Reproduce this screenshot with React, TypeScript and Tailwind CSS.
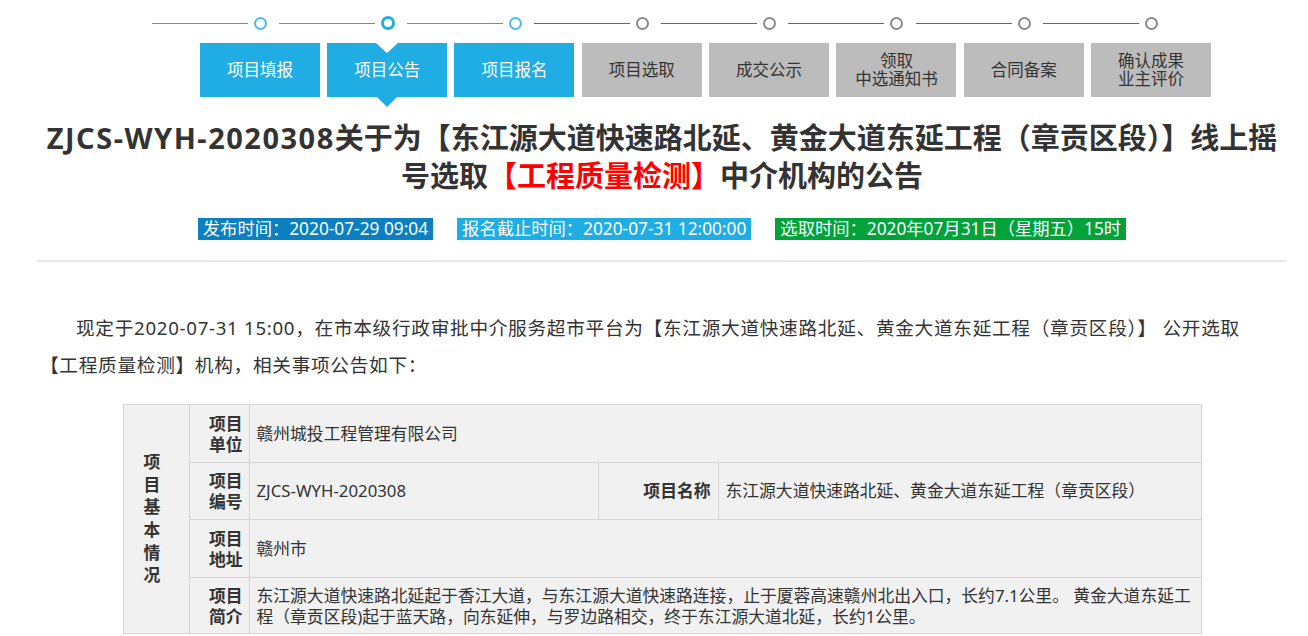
import React from 'react';

// --- step bar data ---
type Step = { label: string[]; done?: boolean; current?: boolean };

const STEPS: Step[] = [
  { label: ['项目填报'], done: true },
  { label: ['项目公告'], done: true, current: true },
  { label: ['项目报名'], done: true },
  { label: ['项目选取'] },
  { label: ['成交公示'] },
  { label: ['领取', '中选通知书'] },
  { label: ['合同备案'] },
  { label: ['确认成果', '业主评价'] },
];

const FONT = "font-['Noto_Sans','Noto_Sans_CJK_SC',sans-serif]";

const StepBar: React.FC = () => (
  <div>
    {/* progress line with circles */}
    <div className="flex pl-[152px] pt-[16px]">
      {STEPS.map((s, i) => (
        <div key={i} className="flex items-center w-[127.3px] shrink-0">
          <div className={s.done ? 'w-[96px] h-px bg-[#1fade3]' : 'w-[96px] h-px bg-[#666666]'} />
          <div
            className={
              s.current
                ? 'ml-[6px] w-[14px] h-[14px] rounded-full border-[3px] border-[#1fade3] bg-white'
                : s.done
                ? 'ml-[6px] w-[13px] h-[13px] rounded-full border-2 border-[#4cbde8] bg-white'
                : 'ml-[6px] w-[13px] h-[13px] rounded-full border-2 border-[#8a8a8a] bg-white'
            }
          />
        </div>
      ))}
    </div>

    {/* step boxes */}
    <div className="flex pl-[196.25px] mt-[13px]">
      {STEPS.map((s, i) => (
        <div key={i} className="w-[127.3px] shrink-0 flex justify-center">
          <div
            className={
              s.done
                ? 'relative w-[120px] h-[54px] bg-[#1fade3] text-white flex flex-col items-center justify-center text-[16.5px] leading-[18px]'
                : 'relative w-[120px] h-[54px] bg-[#bcbcbc] text-[#333333] flex flex-col items-center justify-center text-[16.5px] leading-[18px]'
            }
          >
            {s.label.map((l) => (
              <span key={l}>{l}</span>
            ))}
            {s.current && (
              <>
                <span className="absolute top-0 left-1/2 -translate-x-1/2 w-0 h-0 border-l-[11px] border-r-[11px] border-t-[10px] border-l-transparent border-r-transparent border-t-white" />
                <span className="absolute top-full left-1/2 -translate-x-1/2 w-0 h-0 border-l-[10px] border-r-[10px] border-t-[10px] border-l-transparent border-r-transparent border-t-[#1fade3]" />
              </>
            )}
          </div>
        </div>
      ))}
    </div>
  </div>
);

const Label: React.FC<{ lines: string[] }> = ({ lines }) => (
  <td className="border border-[#d4d4d4] font-bold text-right pr-[6px] leading-[21px] align-middle">
    {lines.map((l) => (
      <div key={l}>{l}</div>
    ))}
  </td>
);

const InfoTable: React.FC = () => (
  <table className="mx-auto mt-[21px] w-[1078px] border-collapse bg-[#f1f1f1] text-[16.8px] text-[#333333] table-fixed">
    <colgroup>
      <col className="w-[66px]" />
      <col className="w-[60px]" />
      <col className="w-[349px]" />
      <col className="w-[120px]" />
      <col className="w-[483px]" />
    </colgroup>
    <tbody>
      <tr className="h-[58px]">
        <td rowSpan={4} className="border border-[#d4d4d4] font-bold text-center pr-[8px] leading-[22.6px] align-middle">
          {'项目基本情况'.split('').map((c) => (
            <div key={c}>{c}</div>
          ))}
        </td>
        <Label lines={['项目', '单位']} />
        <td colSpan={3} className="border border-[#d4d4d4] pl-[7px]">赣州城投工程管理有限公司</td>
      </tr>
      <tr className="h-[57px]">
        <Label lines={['项目', '编号']} />
        <td className="border border-[#d4d4d4] pl-[7px]">ZJCS-WYH-2020308</td>
        <td className="border border-[#d4d4d4] font-bold text-right pr-[7px]">项目名称</td>
        <td className="border border-[#d4d4d4] pl-[7px]">东江源大道快速路北延、黄金大道东延工程（章贡区段）</td>
      </tr>
      <tr className="h-[58px]">
        <Label lines={['项目', '地址']} />
        <td colSpan={3} className="border border-[#d4d4d4] pl-[7px]">赣州市</td>
      </tr>
      <tr className="h-[56px]">
        <td className="border border-[#d4d4d4] border-l-0 font-bold text-right pr-[6px] leading-[21px] align-middle">
          <div>项目</div>
          <div>简介</div>
        </td>
        <td colSpan={3} className="border border-[#d4d4d4] pl-[7px] leading-[21px] whitespace-nowrap">
          东江源大道快速路北延起于香江大道，与东江源大道快速路连接，止于厦蓉高速赣州北出入口，长约7.1公里。 黄金大道东延工
          <br />
          程（章贡区段)起于蓝天路，向东延伸，与罗边路相交，终于东江源大道北延，长约1公里。
        </td>
      </tr>
    </tbody>
  </table>
);

export default function App() {
  return (
    <div className={`${FONT} w-[1308px] h-[636px] overflow-hidden bg-white text-[#333333]`}>
      <StepBar />

      <div className="ml-[37px] w-[1250px]">
        <h1 className="mt-[22px] text-center text-[29px] leading-[38px] font-bold text-[#333333]">
          <span className="whitespace-nowrap">
            <span className="tracking-[1.5px]">ZJCS-WYH-2020308</span>关于为【东江源大道快速路北延、黄金大道东延工程（章贡区段）】线上摇
          </span>
          <br />
          <span className="whitespace-nowrap">
            号选取<span className="text-[#ff0000]">【工程质量检测】</span>中介机构的公告
          </span>
        </h1>

        <div className="mt-[23px] flex justify-center gap-[24px] text-[17.3px] leading-[22px] text-white">
          <span className="bg-[#0a80c0] px-[5px]">发布时间：2020-07-29 09:04</span>
          <span className="bg-[#1fade3] px-[5px]">报名截止时间：2020-07-31 12:00:00</span>
          <span className="bg-[#00a23a] px-[5px]">选取时间：2020年07月31日（星期五）15时</span>
        </div>

        <div className="mt-[20px] border-t-2 border-[#e8e8e8]" />

        <p className="mt-[47px] pl-[3px] text-[18.67px] leading-[37px] tracking-[0.7px] text-[#333333] whitespace-nowrap">
          <span className="pl-[36px]">现定于2020-07-31 15:00，在市本级行政审批中介服务超市平台为【东江源大道快速路北延、黄金大道东延工程（章贡区段）】 公开选取</span>
          <br />
          【工程质量检测】机构，相关事项公告如下：
        </p>

        <InfoTable />
      </div>
    </div>
  );
}
